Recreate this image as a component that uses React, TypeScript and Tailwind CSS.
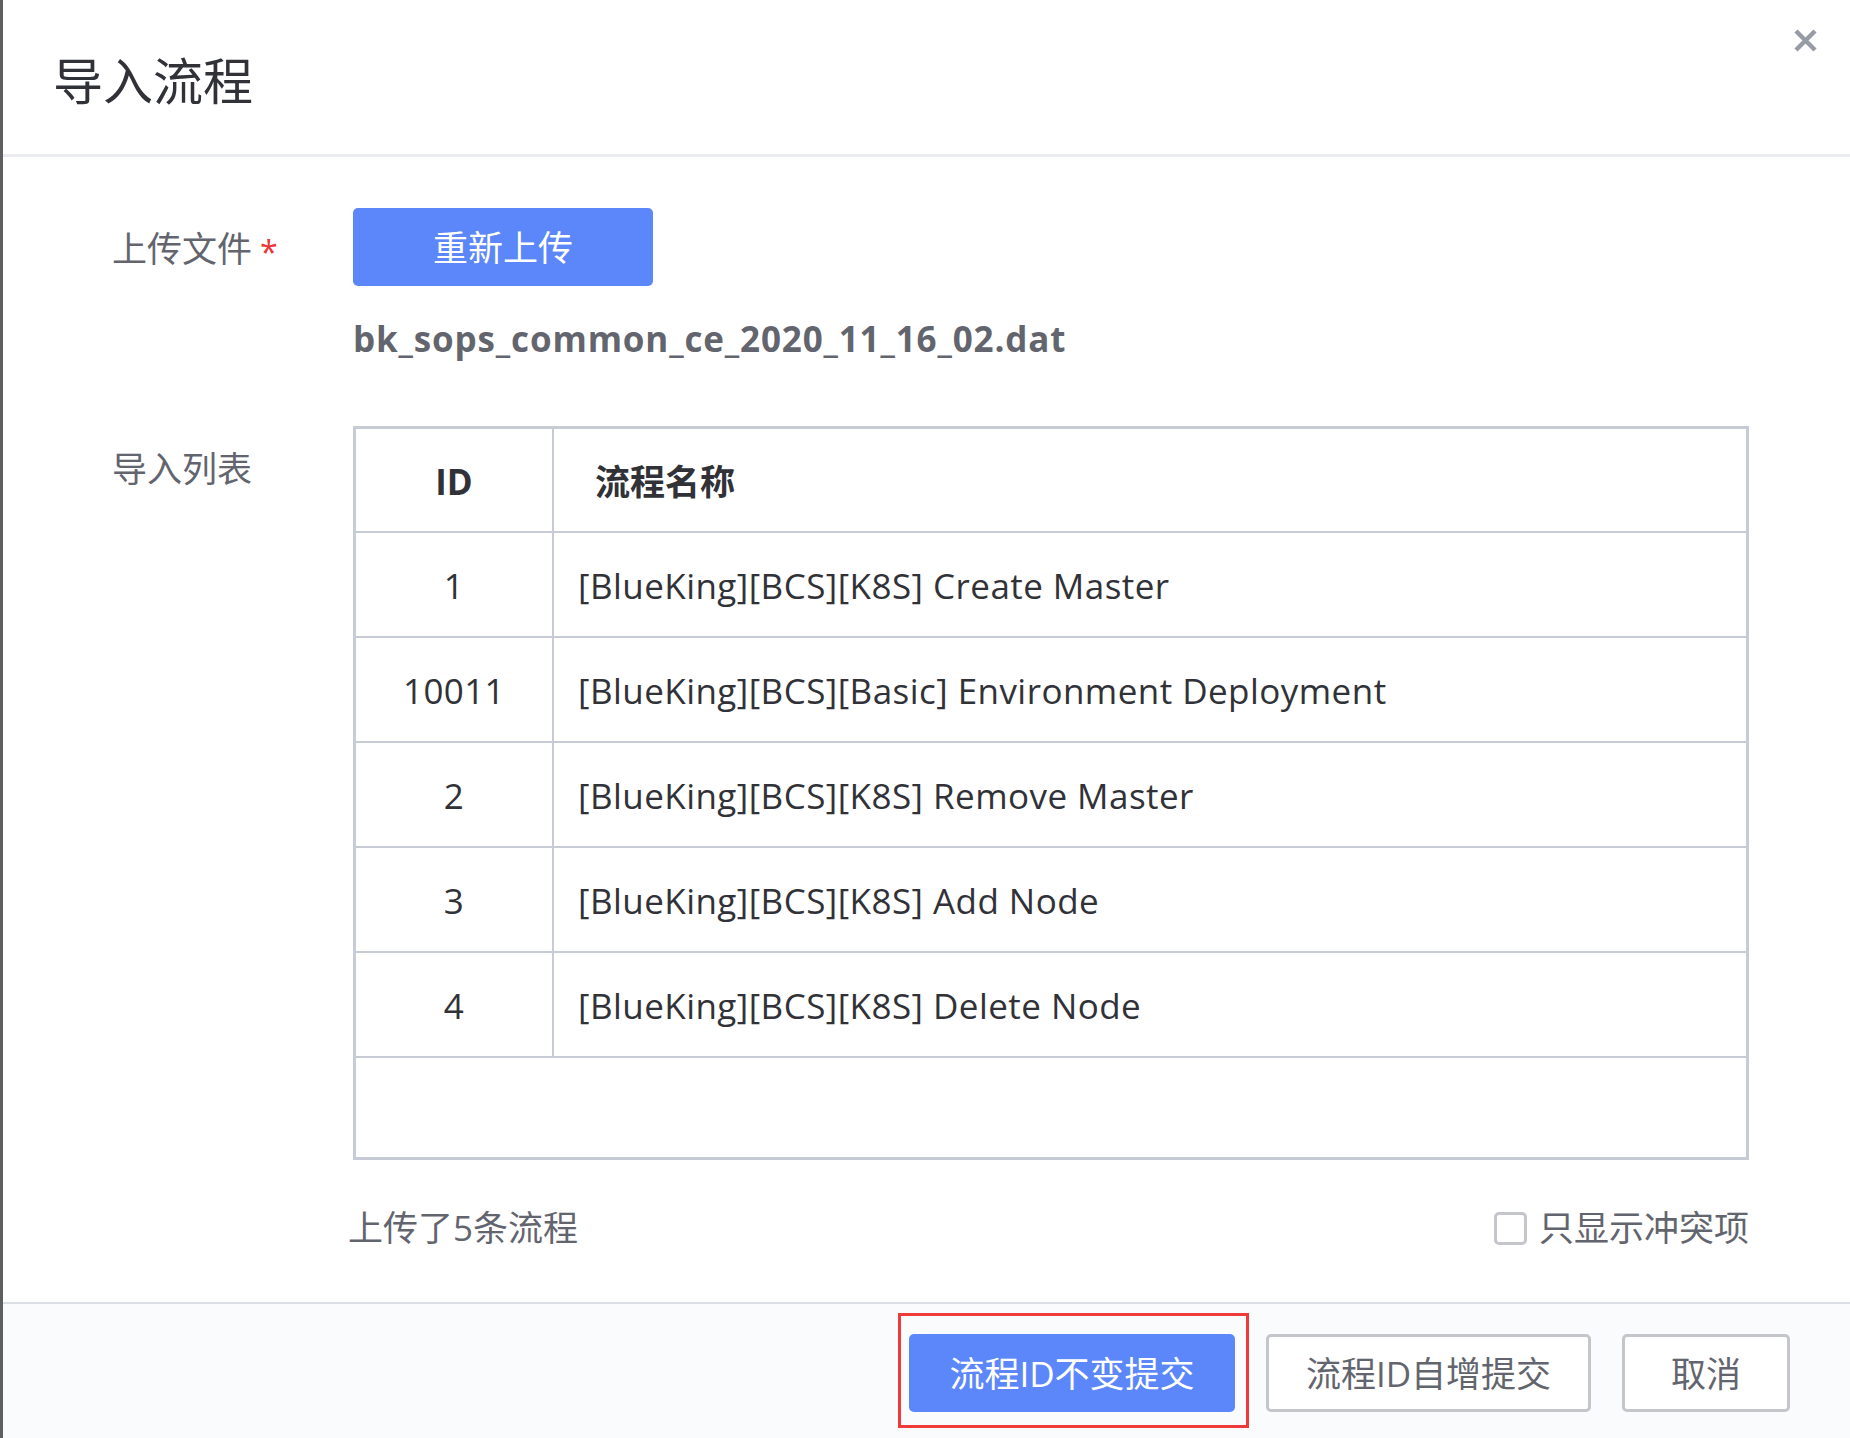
import React from "react";

const rows: { id: string; name: string }[] = [
  { id: "1", name: "[BlueKing][BCS][K8S] Create Master" },
  { id: "10011", name: "[BlueKing][BCS][Basic] Environment Deployment" },
  { id: "2", name: "[BlueKing][BCS][K8S] Remove Master" },
  { id: "3", name: "[BlueKing][BCS][K8S] Add Node" },
  { id: "4", name: "[BlueKing][BCS][K8S] Delete Node" },
];

const font = {
  fontFamily:
    '"Open Sans", "Noto Sans", "Noto Sans CJK SC", sans-serif',
};

export default function App() {
  return (
    <div
      className="relative w-[1850px] h-[1438px] overflow-hidden bg-white border-l-[3px] border-[#5f5f5f] flex flex-col"
      style={font}
    >
      {/* close */}
      <div className="absolute top-[28px] right-[32px] w-[25px] h-[25px]">
        <svg width="25" height="25" viewBox="0 0 25 25">
          <path
            d="M3 3 L22 22 M22 3 L3 22"
            stroke="#979ba5"
            strokeWidth="4.5"
            strokeLinecap="butt"
          />
        </svg>
      </div>

      {/* header */}
      <div className="h-[154px] flex items-center pl-[50px] pt-[8px] shrink-0">
        <span className="text-[50px] leading-[60px] text-[#313238]">导入流程</span>
      </div>
      <div className="h-[3px] bg-[#ebecef] shrink-0" />

      {/* body */}
      <div className="flex-1 pl-[109px] pt-[51px]">
        <div className="flex">
          <div className="w-[241px] shrink-0 h-[78px] pt-[4px] text-[35px] text-[#63656e] flex items-center">
            <span>上传文件</span>
            <span className="text-[#ea3636] text-[32px] ml-[8px] mt-[6px]">*</span>
          </div>
          <div className="flex flex-col">
            <button className="w-[300px] h-[78px] rounded-[5px] bg-[#5c87fa] text-white text-[35px] pt-[2px]">
              重新上传
            </button>
            <div className="mt-[28px] h-[50px] leading-[50px] text-[35px] font-bold text-[#63656e] tracking-[0.85px]">
              bk_sops_common_ce_2020_11_16_02.dat
            </div>
          </div>
        </div>

        <div className="flex mt-[62px]">
          <div className="w-[241px] shrink-0 h-[84px] leading-[86px] text-[35px] text-[#63656e]">
            导入列表
          </div>
          <div className="w-[1396px] flex flex-col">
            <div className="border-[3px] border-[#c6cbd5] flex flex-col">
              <div className="flex h-[104px] border-b-2 border-[#c6cbd5] pt-[4px]">
                <div className="w-[198px] border-r-2 border-[#c6cbd5] -mt-[4px] pt-[4px] flex items-center justify-center text-[35px] font-bold text-[#313238]">
                  ID
                </div>
                <div className="flex-1 flex items-center pl-[41px] text-[35px] font-bold text-[#313238]">
                  流程名称
                </div>
              </div>
              {rows.map((r) => (
                <div key={r.id} className="flex h-[105px] border-b-2 border-[#c6cbd5]">
                  <div className="w-[198px] border-r-2 border-[#c6cbd5] pt-[4px] flex items-center justify-center text-[35px] text-[#313238] tracking-[0.4px]">
                    {r.id}
                  </div>
                  <div className="flex-1 flex items-center pl-[24px] pt-[4px] text-[35px] text-[#313238] tracking-[0.45px]">
                    {r.name}
                  </div>
                </div>
              ))}
              <div className="h-[99px]" />
            </div>

            <div className="mt-[43px] h-[50px] flex items-center justify-between">
              <span className="text-[35px] text-[#63656e] -ml-[5px]">上传了5条流程</span>
              <label className="flex items-center gap-[12px]">
                <span className="w-[33px] h-[33px] rounded-[5px] border-[3px] border-[#c4c6cc] bg-white" />
                <span className="text-[35px] text-[#63656e]">只显示冲突项</span>
              </label>
            </div>
          </div>
        </div>
      </div>

      {/* footer */}
      <div className="h-[136px] shrink-0 border-t-2 border-[#dcdee5] bg-[#fafbfd] flex items-start justify-end pt-[30px] pr-[60px] gap-[31px]">
        <div className="relative">
          <button className="w-[326px] h-[78px] rounded-[5px] bg-[#5c87fa] text-white text-[35px] pt-[2px]">
            流程ID不变提交
          </button>
          <div className="absolute -left-[11px] -right-[14px] -top-[21px] -bottom-[16px] border-[3px] border-[#f03a3a] pointer-events-none" />
        </div>
        <button className="w-[325px] h-[78px] rounded-[5px] bg-white border-[3px] border-[#c4c6cc] text-[#63656e] text-[35px] pt-[2px]">
          流程ID自增提交
        </button>
        <button className="w-[168px] h-[78px] rounded-[5px] bg-white border-[3px] border-[#c4c6cc] text-[#63656e] text-[35px] pt-[2px]">
          取消
        </button>
      </div>
    </div>
  );
}
